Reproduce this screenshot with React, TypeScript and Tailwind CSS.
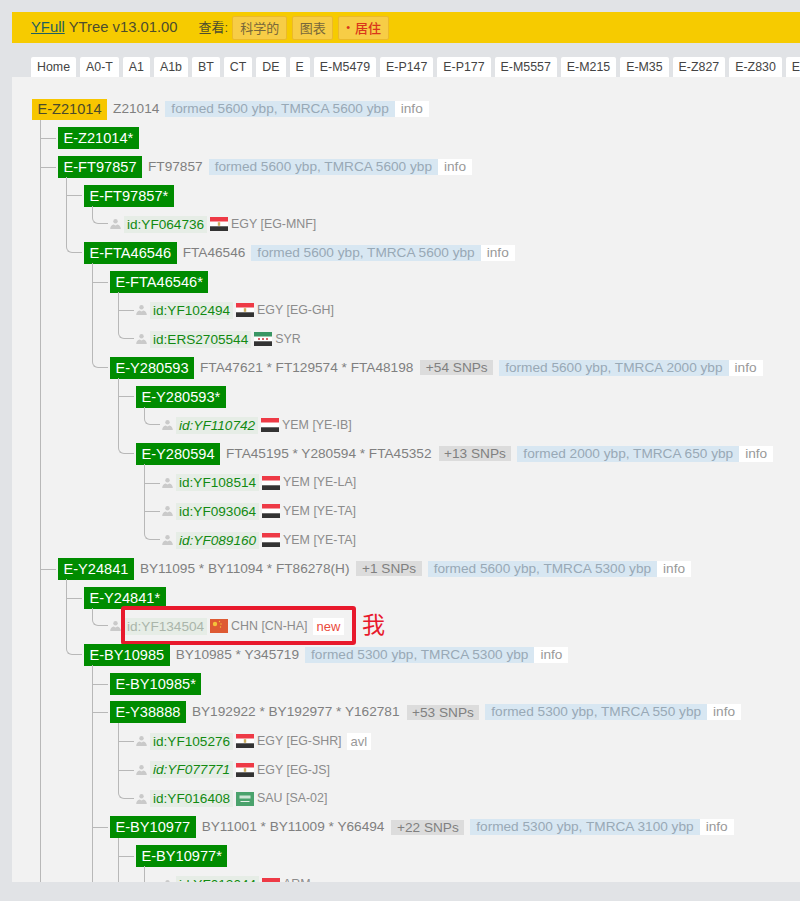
import React from 'react';

/* ------------------ Types ------------------ */
type FlagName = 'egy' | 'syr' | 'yem' | 'chn' | 'sau';

interface TreeItem {
  label?: string;
  root?: boolean;
  snps?: string;
  more?: string;
  age?: string;
  open?: boolean;
  // leaf rows
  id?: string;
  italic?: boolean;
  flag?: FlagName;
  place?: string;
  note?: string;
  mine?: boolean;
  children?: TreeItem[];
}

const TABS = ['Home', 'A0-T', 'A1', 'A1b', 'BT', 'CT', 'DE', 'E', 'E-M5479', 'E-P147', 'E-P177', 'E-M5557', 'E-M215', 'E-M35', 'E-Z827', 'E-Z830', 'E-V68'];

const TREE: TreeItem = {
  label: 'E-Z21014',
  root: true,
  snps: 'Z21014',
  age: 'formed 5600 ybp, TMRCA 5600 ybp',
  children: [
    { label: 'E-Z21014*' },
    {
      label: 'E-FT97857',
      snps: 'FT97857',
      age: 'formed 5600 ybp, TMRCA 5600 ybp',
      children: [
        {
          label: 'E-FT97857*',
          children: [{ id: 'id:YF064736', flag: 'egy', place: 'EGY [EG-MNF]' }],
        },
        {
          label: 'E-FTA46546',
          snps: 'FTA46546',
          age: 'formed 5600 ybp, TMRCA 5600 ybp',
          children: [
            {
              label: 'E-FTA46546*',
              children: [
                { id: 'id:YF102494', flag: 'egy', place: 'EGY [EG-GH]' },
                { id: 'id:ERS2705544', flag: 'syr', place: 'SYR' },
              ],
            },
            {
              label: 'E-Y280593',
              snps: 'FTA47621 * FT129574 * FTA48198',
              more: '+54 SNPs',
              age: 'formed 5600 ybp, TMRCA 2000 ybp',
              children: [
                {
                  label: 'E-Y280593*',
                  children: [{ id: 'id:YF110742', italic: true, flag: 'yem', place: 'YEM [YE-IB]' }],
                },
                {
                  label: 'E-Y280594',
                  snps: 'FTA45195 * Y280594 * FTA45352',
                  more: '+13 SNPs',
                  age: 'formed 2000 ybp, TMRCA 650 ybp',
                  children: [
                    { id: 'id:YF108514', flag: 'yem', place: 'YEM [YE-LA]' },
                    { id: 'id:YF093064', flag: 'yem', place: 'YEM [YE-TA]' },
                    { id: 'id:YF089160', italic: true, flag: 'yem', place: 'YEM [YE-TA]' },
                  ],
                },
              ],
            },
          ],
        },
      ],
    },
    {
      label: 'E-Y24841',
      open: true,
      snps: 'BY11095 * BY11094 * FT86278(H)',
      more: '+1 SNPs',
      age: 'formed 5600 ybp, TMRCA 5300 ybp',
      children: [
        {
          label: 'E-Y24841*',
          children: [{ id: 'id:YF134504', flag: 'chn', place: 'CHN [CN-HA]', note: 'new', mine: true }],
        },
        {
          label: 'E-BY10985',
          snps: 'BY10985 * Y345719',
          age: 'formed 5300 ybp, TMRCA 5300 ybp',
          children: [
            { label: 'E-BY10985*' },
            {
              label: 'E-Y38888',
              snps: 'BY192922 * BY192977 * Y162781',
              more: '+53 SNPs',
              age: 'formed 5300 ybp, TMRCA 550 ybp',
              children: [
                { id: 'id:YF105276', flag: 'egy', place: 'EGY [EG-SHR]', note: 'avl' },
                { id: 'id:YF077771', italic: true, flag: 'egy', place: 'EGY [EG-JS]' },
                { id: 'id:YF016408', flag: 'sau', place: 'SAU [SA-02]' },
              ],
            },
            {
              label: 'E-BY10977',
              open: true,
              snps: 'BY11001 * BY11009 * Y66494',
              more: '+22 SNPs',
              age: 'formed 5300 ybp, TMRCA 3100 ybp',
              children: [
                {
                  label: 'E-BY10977*',
                  open: true,
                  children: [{ id: 'id:YF012044', open: true, flag: 'yem', place: 'ARM' }],
                },
              ],
            },
          ],
        },
      ],
    },
  ],
};

/* ------------------ Small drawings ------------------ */
function Flag({ name }: { name: FlagName }) {
  return (
    <svg width="18" height="14" viewBox="0 0 18 14" className="ml-[2.5px] mr-[3.5px] shrink-0">
      {name === 'chn' && (
        <>
          <rect width="18" height="14" fill="#de5a33" />
          <circle cx="5" cy="5" r="2.2" fill="#f4c23a" />
          <circle cx="9.5" cy="2.5" r="0.7" fill="#f4c23a" />
          <circle cx="11" cy="5" r="0.7" fill="#f4c23a" />
          <circle cx="10.5" cy="8" r="0.7" fill="#f4c23a" />
        </>
      )}
      {name === 'sau' && (
        <>
          <rect width="18" height="14" fill="#4aa26c" />
          <rect x="3.5" y="3.5" width="11" height="3" fill="#cfe5d6" />
          <rect x="4.5" y="9" width="9" height="1" fill="#e6f1ea" />
        </>
      )}
      {(name === 'egy' || name === 'yem') && (
        <>
          <rect width="18" height="4.7" fill="#ee3a46" />
          <rect y="4.7" width="18" height="4.6" fill="#ffffff" />
          <rect y="9.3" width="18" height="4.7" fill="#333333" />
          {name === 'egy' && <rect x="7.8" y="5.2" width="2.4" height="3.6" fill="#d0b060" />}
        </>
      )}
      {name === 'syr' && (
        <>
          <rect width="18" height="4.7" fill="#3a9664" />
          <rect y="4.7" width="18" height="4.6" fill="#ffffff" />
          <rect y="9.3" width="18" height="4.7" fill="#333333" />
          <circle cx="5" cy="7" r="1" fill="#c8303a" />
          <circle cx="9" cy="7" r="1" fill="#c8303a" />
          <circle cx="13" cy="7" r="1" fill="#c8303a" />
        </>
      )}
    </svg>
  );
}

function PersonIcon() {
  return (
    <svg width="11" height="10" viewBox="0 0 11 10" className="shrink-0" fill="#cacaca">
      <circle cx="5.5" cy="2.3" r="2.2" />
      <path d="M0.2 10 C0.2 7.4 1.6 5.9 3.6 5.4 L5.5 6.6 L7.4 5.4 C9.4 5.9 10.8 7.4 10.8 10 Z" />
    </svg>
  );
}

/* ------------------ Rows ------------------ */
function BranchRow({ item }: { item: TreeItem }) {
  return (
    <div className="flex items-center h-[28.72px] whitespace-nowrap text-[13.65px]">
      <span
        className={
          item.root
            ? 'bg-[#f7c600] text-[#4a4a2a] text-[14.6px] leading-[21px] px-[5.5px]'
            : 'bg-[#008c00] text-white text-[14.6px] leading-[22px] px-[5.5px]'
        }
      >
        {item.label}
      </span>
      {item.snps && <span className="ml-[6px] text-[#808080]">{item.snps}</span>}
      {item.more && <span className="ml-[7px] bg-[#dcdcdc] text-[#808080] px-[5.5px] leading-[15px]">{item.more}</span>}
      {item.age && <span className="ml-[6px] bg-[#d8e7f2] text-[#98a9b6] px-[6px] leading-[16px]">{item.age}</span>}
      {item.age && <span className="bg-white text-[#999999] px-[6px] leading-[16px]">info</span>}
    </div>
  );
}

function LeafRow({ item }: { item: TreeItem }) {
  return (
    <div className="flex items-center h-[28.72px] whitespace-nowrap text-[12.4px] text-[#8c8c8c]">
      <span className="mr-[3px] flex">
        <PersonIcon />
      </span>
      <span className="relative flex items-center">
        {item.mine && (
          <span className="absolute left-[-3px] right-[-12px] top-[-11px] bottom-[-9px] border-4 border-[#e8192c] rounded-[3px]" />
        )}
        <span
          className={`${item.italic ? 'italic' : ''} ${item.mine ? 'text-[#aab5aa]' : 'text-[#128a12]'} bg-[#e6ede6] px-[3px] text-[13.6px] leading-[17px]`}
        >
          {item.id}
        </span>
        {item.flag && <Flag name={item.flag} />}
        <span>{item.place}</span>
        {item.note && (
          <span className={`ml-[5.5px] bg-white px-[3.5px] text-[13px] leading-[17px] ${item.mine ? 'text-[#ea4a3c]' : 'text-[#999999]'}`}>
            {item.note}
          </span>
        )}
        {item.mine && (
          <span className="absolute left-[238px] top-[-9px] text-[23px] leading-[30px] text-[#e8192c] font-['Noto_Sans_CJK_SC',sans-serif]">
            我
          </span>
        )}
      </span>
    </div>
  );
}

/* Each child draws its own elbow: vertical part from the parent, horizontal to the row */
function TreeNode({ item, last }: { item: TreeItem; last: boolean }) {
  return (
    <li className="relative pl-[26px]">
      <span
        className={`absolute left-[8px] top-[-4px] w-[16px] border-l border-[#b8b8b8] ${last ? 'h-[18.5px] border-b rounded-bl-[6px]' : 'h-full'}`}
      />
      {!last && <span className="absolute left-[8px] top-[14.3px] w-[16px] border-t border-[#b8b8b8]" />}
      <NodeBody item={item} />
    </li>
  );
}

function NodeBody({ item }: { item: TreeItem }) {
  return (
    <>
      {item.id ? <LeafRow item={item} /> : <BranchRow item={item} />}
      {item.children && (
        <ul>
          {item.children.map((child, i) => (
            <TreeNode
              key={child.label ?? child.id}
              item={child}
              last={i === item.children!.length - 1 && !child.open}
            />
          ))}
        </ul>
      )}
    </>
  );
}

/* ------------------ Page ------------------ */
export default function App() {
  return (
    <div className="h-[901px] overflow-hidden bg-[#e1e3e6] pt-3 pl-3 font-['Liberation_Sans',Arial,sans-serif]">
      <div className="flex items-center h-[31px] bg-[#f6cb00] pl-[19px] text-[14.8px] text-[#4d4d2e] whitespace-nowrap">
        <a className="underline text-[#1f5f5f]">YFull</a>
        <span className="ml-[4px]">YTree v13.01.00</span>
        <span className="ml-[21px] text-[13px] font-['Liberation_Sans','Noto_Sans_CJK_SC',sans-serif]">查看:</span>
        <div className="ml-[4px] flex gap-[5px] text-[13px] font-['Noto_Sans_CJK_SC',sans-serif]">
          <span className="border border-[#ebb92a] bg-[#f7cd46] rounded-[2px] px-[7px] h-[24px] leading-[22px] text-[#77683a]">科学的</span>
          <span className="border border-[#ebb92a] bg-[#f7cd46] rounded-[2px] px-[6.5px] h-[24px] leading-[22px] text-[#77683a]">图表</span>
          <span className="flex items-center gap-[5px] border border-[#ebb92a] bg-[#f7cd46] rounded-[2px] px-[7px] h-[24px] text-[#d9361a] font-medium">
            <span className="font-['Liberation_Sans',sans-serif] text-[11px]">•</span>
            居住
          </span>
        </div>
      </div>
      <div className="flex gap-[4px] pl-[19px] mt-[14px] h-[20px] text-[12.38px] text-[#444444] whitespace-nowrap">
        {TABS.map((tab) => (
          <span key={tab} className="bg-white px-[6px] leading-[20px] rounded-t-[2px]">
            {tab}
          </span>
        ))}
      </div>
      <div className="h-[805px] overflow-hidden bg-[#f2f2f2] pl-[20px] pt-[18px]">
        <NodeBody item={TREE} />
      </div>
    </div>
  );
}
